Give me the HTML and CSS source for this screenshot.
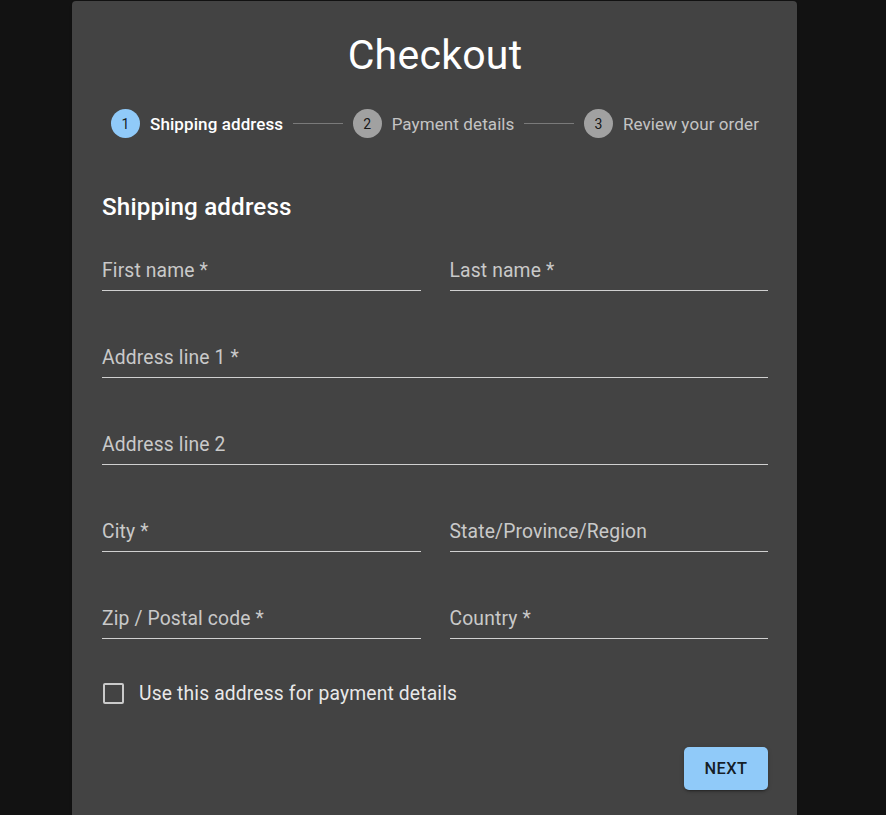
FILE: index.html
```html
<!DOCTYPE html>
<html lang="en">
<head>
<meta charset="utf-8">
<title>Checkout</title>
<link rel="stylesheet" href="styles.css">
</head>
<body>
<div class="page">
  <main class="card">
    <h1 class="title">Checkout</h1>
    <div class="stepper">
      <div class="step active"><span class="step-icon">1</span><span class="step-label">Shipping address</span></div>
      <div class="connector"></div>
      <div class="step"><span class="step-icon">2</span><span class="step-label">Payment details</span></div>
      <div class="connector"></div>
      <div class="step"><span class="step-icon">3</span><span class="step-label">Review your order</span></div>
    </div>
    <h2 class="section-title">Shipping address</h2>
    <div class="form-grid">
      <div class="field"><span class="field-label">First name *</span></div>
      <div class="field"><span class="field-label">Last name *</span></div>
      <div class="field wide"><span class="field-label">Address line 1 *</span></div>
      <div class="field wide"><span class="field-label">Address line 2</span></div>
      <div class="field"><span class="field-label">City *</span></div>
      <div class="field"><span class="field-label">State/Province/Region</span></div>
      <div class="field"><span class="field-label">Zip / Postal code *</span></div>
      <div class="field"><span class="field-label">Country *</span></div>
    </div>
    <label class="check-row"><span class="checkbox"></span><span class="check-text">Use this address for payment details</span></label>
    <div class="actions"><button class="btn-next">NEXT</button></div>
  </main>
</div>
</body>
</html>
```

FILE: styles.css
```css
* { box-sizing: border-box; }
html, body { margin: 0; padding: 0; background: #121212; height: 100%; overflow: hidden; }
body { font-family: Roboto, "Liberation Sans", sans-serif; color: #fff; }
.page { padding-left: 72px; padding-top: 1px; }
.card {
  width: 725px;
  min-height: 900px;
  background: #434343;
  border-radius: 4px;
  box-shadow: 0 2px 1px -1px rgba(0,0,0,0.2), 0 1px 1px 0 rgba(0,0,0,0.14), 0 1px 3px 0 rgba(0,0,0,0.12);
  padding: 32px 29px 0 30px;
}
.title {
  margin: 0;
  text-align: center;
  font-weight: 400;
  font-size: 41px;
  line-height: 44px;
  letter-spacing: 0.25px;
}
.stepper {
  display: flex;
  align-items: center;
  margin-top: 32px;
  height: 29px;
}
.step { display: flex; align-items: center; padding: 0 9px; }
.step-icon {
  width: 29px; height: 29px; border-radius: 50%;
  background: #a1a1a1;
  color: rgba(0,0,0,0.87);
  font-size: 14px;
  display: flex; align-items: center; justify-content: center;
  margin-right: 10px;
}
.step.active .step-icon { background: #90caf9; }
.step-label { font-size: 17px; color: rgba(255,255,255,0.7); letter-spacing: 0.1px; }
.step.active .step-label { color: #fff; font-weight: 500; }
.connector { flex: 1; border-top: 1px solid #7a7a7a; margin: 0 1px; }
.section-title {
  margin: 55px 0 0;
  font-size: 24.2px;
  line-height: 28px;
  font-weight: 500;
  letter-spacing: 0.15px;
}
.form-grid {
  display: grid;
  grid-template-columns: 1fr 1fr;
  column-gap: 29px;
  row-gap: 46px;
  margin-top: 29px;
}
.field {
  height: 41px;
  display: flex;
  align-items: flex-end;
  padding-bottom: 8px;
  border-bottom: 1px solid rgba(255,255,255,0.75);
}
.field.wide { grid-column: 1 / -1; }
.field-label { font-size: 19.3px; line-height: 22px; color: rgba(255,255,255,0.72); letter-spacing: 0.15px; }
.check-row { display: flex; align-items: center; margin-top: 34px; height: 40px; }
.checkbox {
  width: 21px; height: 21px;
  border: 2.3px solid rgba(255,255,255,0.72);
  border-radius: 2px;
  margin-left: 1px;
  margin-right: 15px;
}
.check-text { font-size: 19.3px; color: rgba(255,255,255,0.9); letter-spacing: 0.15px; }
.actions { display: flex; justify-content: flex-end; margin-top: 34px; }
.btn-next {
  width: 84px; height: 43px;
  border: none;
  border-radius: 5px;
  background: #90caf9;
  color: rgba(0,0,0,0.87);
  font-family: Roboto, "Liberation Sans", sans-serif;
  font-weight: 500;
  font-size: 16.4px;
  letter-spacing: 0.47px;
  box-shadow: 0 3px 1px -2px rgba(0,0,0,0.2), 0 2px 2px 0 rgba(0,0,0,0.14), 0 1px 5px 0 rgba(0,0,0,0.12);
}
```
